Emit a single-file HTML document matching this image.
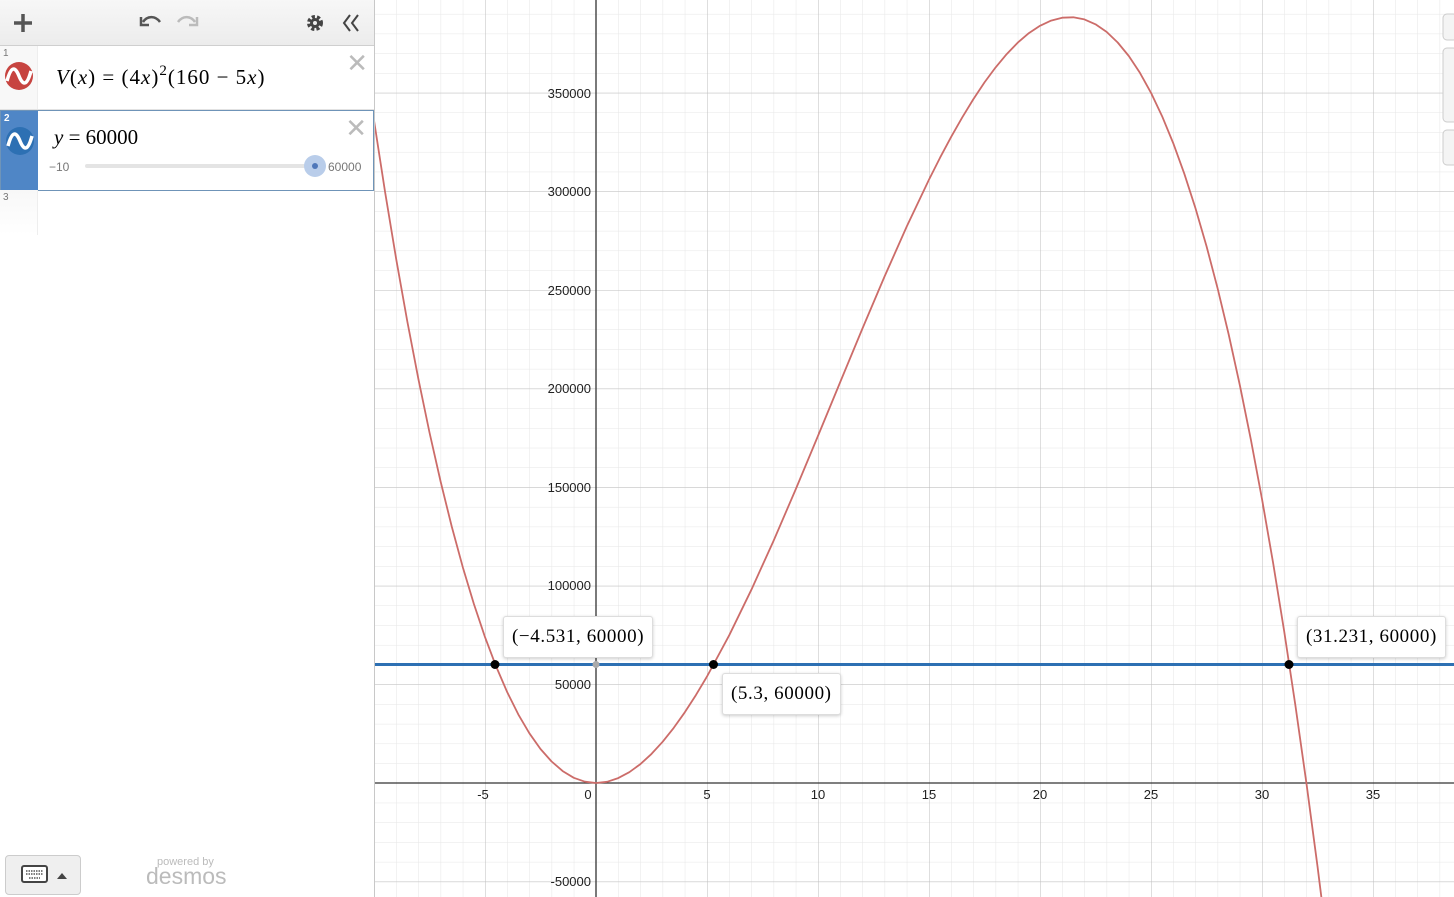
<!DOCTYPE html>
<html><head><meta charset="utf-8"><style>
html,body{margin:0;width:1454px;height:897px;overflow:hidden}
body{font-family:"Liberation Sans",sans-serif;background:#fff;position:relative}
.panel{position:absolute;left:0;top:0;width:374px;height:897px;background:#fff;border-right:1px solid #c8c8c8;z-index:2;overflow:hidden;box-sizing:border-box;width:375px}
.top{position:absolute;left:0;top:0;width:374px;height:45px;background:linear-gradient(#f7f7f7,#ececec);border-bottom:1px solid #cfcfcf}
.row{position:absolute;left:0;width:374px;border-bottom:1px solid #e2e2e2}
.gut{position:absolute;left:0;top:0;bottom:0;width:37px;background:#f8f8f8;border-right:1px solid #eee}
.num{position:absolute;left:3px;top:2px;font-size:10px;color:#777}
.math{position:absolute;font-family:"Liberation Serif",serif;font-size:21px;color:#000;letter-spacing:1px;white-space:nowrap}
.x{position:absolute;right:6px;font-size:26px;color:#bbb;font-weight:300}
.lbl{position:absolute;background:#fff;border:1px solid #ddd;border-radius:3px;box-shadow:0 1px 3px rgba(0,0,0,.2);font-family:"Liberation Serif",serif;font-size:19px;letter-spacing:.6px;padding:0 8px;height:40px;line-height:40px;z-index:1;white-space:nowrap}
</style></head><body>
<svg width="1454" height="897" style="position:absolute;left:0;top:0">
<defs>
<pattern id="mi" patternUnits="userSpaceOnUse" x="596" y="783" width="22.2" height="19.72"><path d="M0 0V19.72M0 0H22.2" stroke="#e6e6e6" stroke-width="1" fill="none"/></pattern>
<pattern id="ma" patternUnits="userSpaceOnUse" x="596" y="783" width="111" height="98.6"><path d="M0 0V98.6M0 0H111" stroke="#bdbdbd" stroke-width="1" fill="none"/></pattern>
</defs>
<rect x="375" y="0" width="1079" height="897" fill="url(#mi)"/>
<rect x="375" y="0" width="1079" height="897" fill="url(#ma)"/>
<line x1="596" y1="0" x2="596" y2="897" stroke="#333" stroke-width="1.3"/>
<line x1="375" y1="783" x2="1454" y2="783" stroke="#333" stroke-width="1.3"/>
<g font-size="13" fill="#222" text-anchor="middle" font-family="Liberation Sans">
<text x="483" y="799">-5</text><text x="588" y="799">0</text><text x="707" y="799">5</text><text x="818" y="799">10</text><text x="929" y="799">15</text><text x="1040" y="799">20</text><text x="1151" y="799">25</text><text x="1262" y="799">30</text><text x="1373" y="799">35</text>
</g>
<g font-size="13" fill="#222" text-anchor="end" font-family="Liberation Sans">
<text x="591" y="98">350000</text><text x="591" y="196">300000</text><text x="591" y="295">250000</text><text x="591" y="393">200000</text><text x="591" y="492">150000</text><text x="591" y="590">100000</text><text x="591" y="689">50000</text><text x="591" y="886">-50000</text>
</g>
<line x1="375" y1="664.5" x2="1454" y2="664.5" stroke="#2d70b3" stroke-width="3"/>
<polyline fill="none" stroke="#cc6c69" stroke-width="1.8" stroke-linejoin="round" points="374,120.4 385.1,192.1 396.2,259.1 407.3,321.4 418.4,379.1 429.5,432.5 440.6,481.5 451.7,526.4 462.8,567.2 473.9,604 485,637.1 496.1,666.4 507.2,692.1 518.3,714.4 529.4,733.3 540.5,749 551.6,761.5 562.7,771.1 573.8,777.8 584.9,781.7 596,783 607.1,781.8 618.2,778.1 629.3,772.2 640.4,764.1 651.5,753.9 662.6,741.8 673.7,727.9 684.8,712.3 695.9,695.1 707,676.5 729.2,635.3 751.4,589.7 773.6,540.7 795.8,489.1 818,435.9 840.2,382.1 862.4,328.6 884.6,276.4 906.8,226.4 929,179.6 940.1,157.6 951.2,136.8 962.3,117.3 973.4,99.1 984.5,82.4 995.6,67.4 1006.7,54.1 1017.8,42.6 1028.9,33.1 1040,25.8 1051.1,20.6 1062.2,17.7 1073.3,17.3 1084.4,19.4 1095.5,24.3 1106.6,31.9 1117.7,42.5 1128.8,56 1139.9,72.8 1151,92.8 1162.1,116.2 1173.2,143.1 1184.3,173.7 1195.4,208 1206.5,246.1 1217.6,288.3 1228.7,334.5 1239.8,385 1250.9,439.8 1262,499 1273.1,562.9 1284.2,631.4 1295.3,704.7 1306.4,783 1317.5,866.3 1328.6,954.8"/>
<circle cx="495" cy="664.5" r="4.5" fill="#000"/><circle cx="713.5" cy="664.5" r="4.5" fill="#000"/><circle cx="1289" cy="664.5" r="4.5" fill="#000"/><circle cx="596" cy="664.5" r="3.5" fill="#aaa"/>
<rect x="1443" y="14" width="14" height="26" rx="4" fill="#f4f4f4" stroke="#ccc"/>
<rect x="1443" y="48" width="14" height="74" rx="4" fill="#f4f4f4" stroke="#ccc"/>
<rect x="1443" y="130" width="14" height="35" rx="4" fill="#f4f4f4" stroke="#ccc"/>
</svg>
<div class="lbl" style="left:503px;top:616px">(−4.531, 60000)</div>
<div class="lbl" style="left:722px;top:673px">(5.3, 60000)</div>
<div class="lbl" style="left:1297px;top:616px">(31.231, 60000)</div>

<div class="panel">
<div class="top">
<svg width="374" height="45" style="position:absolute;left:0;top:0">
<path d="M23 14V32M14 23H32" stroke="#555" stroke-width="3.5"/>
<path d="M160 22C155 15 147 16 143 22M141 17V25H149" stroke="#555" stroke-width="2.5" fill="none"/>
<path d="M178 22C183 15 191 16 195 22M197 17V25H189" stroke="#bbb" stroke-width="2.5" fill="none"/>
<circle cx="315" cy="23" r="6" fill="none" stroke="#444" stroke-width="4" stroke-dasharray="3 2"/><circle cx="315" cy="23" r="5" fill="#444"/><circle cx="315" cy="23" r="2" fill="#eee"/>
<path d="M350 15L344 23L350 31M358 15L352 23L358 31" stroke="#444" stroke-width="2" fill="none"/>
</svg>
</div>
<div class="row" style="top:46px;height:63px">
<div class="gut"></div><div class="num">1</div>
<svg width="30" height="30" style="position:absolute;left:4px;top:15px"><circle cx="15" cy="15" r="14" fill="#c74440"/><path d="M3 20C7 5 11 5 15 15S23 25 27 10" stroke="#fff" stroke-width="3.5" fill="none"/></svg>
<div class="math" style="left:56px;top:19px"><i>V</i>(<i>x</i>) = (4<i>x</i>)<span style="font-size:15px;position:relative;top:-9px">2</span>(160 − 5<i>x</i>)</div>
<div class="x" style="top:2px">✕</div>
</div>
<div class="row" style="top:110px;height:79px;border:1px solid #6f94b8;width:372px">
<div style="position:absolute;left:0;top:0;bottom:0;width:37px;background:#4f86c6"></div><div class="num" style="color:#fff;font-weight:bold">2</div>
<svg width="30" height="30" style="position:absolute;left:4px;top:15px"><circle cx="15" cy="15" r="14" fill="#2d70b3"/><path d="M3 20C7 5 11 5 15 15S23 25 27 10" stroke="#fff" stroke-width="3.5" fill="none"/></svg>
<div class="math" style="left:53px;top:14px;letter-spacing:0"><i>y</i> = 60000</div>
<div class="x" style="top:2px">✕</div>
<div style="position:absolute;left:48px;top:49px;font-size:12px;color:#777">−10</div>
<div style="position:absolute;left:84px;top:53px;width:230px;height:4px;background:#e4e4e4;border-radius:2px"></div>
<div style="position:absolute;left:303px;top:44px;width:22px;height:22px;border-radius:50%;background:#b9cdea"></div>
<div style="position:absolute;left:311px;top:52px;width:6px;height:6px;border-radius:50%;background:#4f77b9"></div>
<div style="position:absolute;left:327px;top:49px;font-size:12px;color:#777">60000</div>
</div>
<div class="row" style="top:190px;height:45px;border:none">
<div class="gut" style="background:linear-gradient(#f8f8f8,#fff)"></div><div class="num">3</div></div>
<div style="position:absolute;left:5px;top:855px;width:76px;height:40px;border:1px solid #ccc;border-radius:4px;background:#efefef;box-sizing:border-box">
<svg width="76" height="40"><rect x="16" y="10" width="25" height="16" rx="2" fill="#fff" stroke="#444" stroke-width="2"/><path d="M20 15H37M20 18H37M23 22H34" stroke="#555" stroke-width="1.5" stroke-dasharray="1.5 1"/><path d="M51 23L56 17L61 23Z" fill="#444"/></svg>
</div>
<div style="position:absolute;left:157px;top:856px;font-size:11px;line-height:12px;color:#bbb">powered by</div>
<div style="position:absolute;left:146px;top:864px;font-size:23px;line-height:24px;color:#bbb">desmos</div>
</div>
</body></html>
